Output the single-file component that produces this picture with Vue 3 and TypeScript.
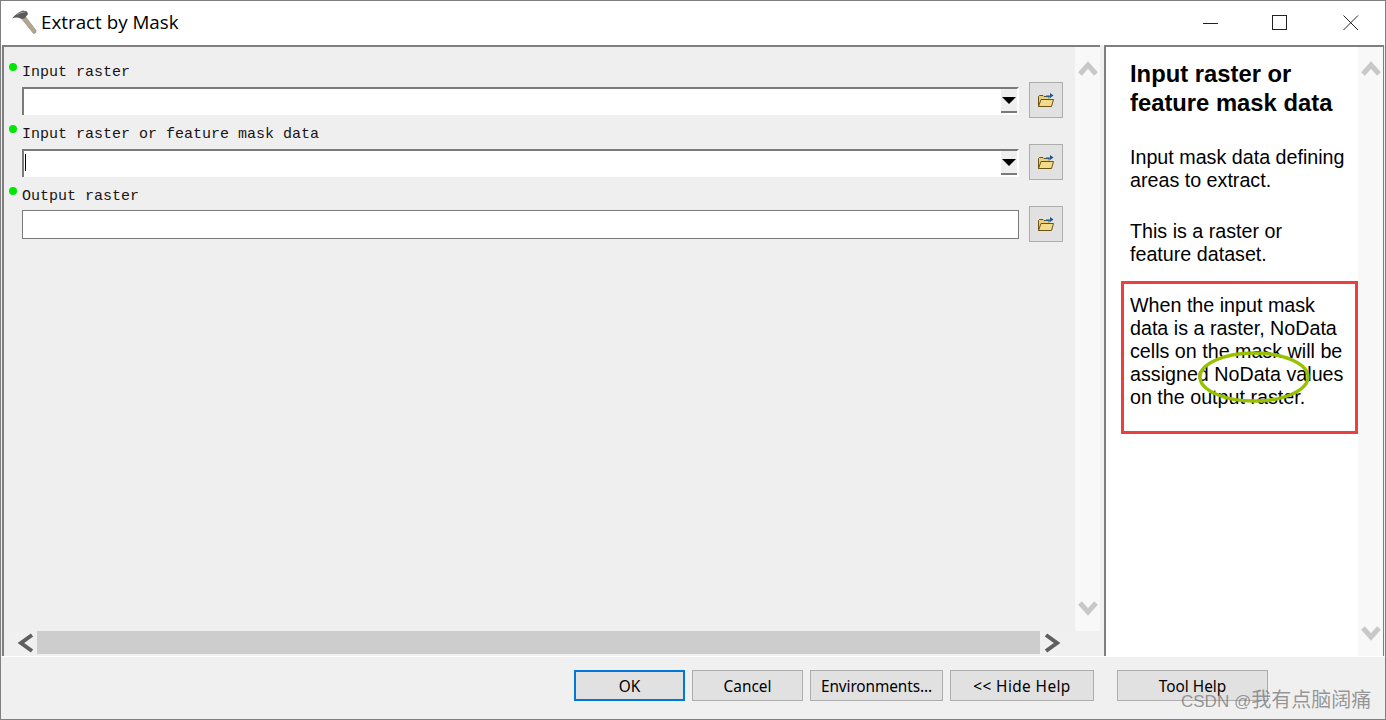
<script setup lang="ts">
interface Field { label: string; kind: 'combo' | 'input'; caret?: boolean }
const fields: Field[] = [
  { label: 'Input raster', kind: 'combo' },
  { label: 'Input raster or feature mask data', kind: 'combo', caret: true },
  { label: 'Output raster', kind: 'input' },
]
</script>

<template>
  <div class="window">
    <div class="top-strip"></div>
    <header class="titlebar">
      <svg class="hammer" width="26" height="26" viewBox="0 0 26 26">
        <path d="M10.5 8.5 L14 6 L25 20.5 Q25.5 23.5 22.5 23.5 Z" fill="#b3a68c" stroke="#8f8f86" stroke-width=".7"/>
        <path d="M1 8.5 Q6 2.5 12 0.5 L16 1.5 L17 4 L13.5 8.5 L10.5 9 Q6 6.5 1 8.5 Z" fill="#5a5a5a"/>
        <path d="M6 4.5 Q10 2 14 2" stroke="#a0a0a0" stroke-width="1" fill="none"/>
      </svg>
      <span class="title">Extract by Mask</span>
      <div class="controls">
        <svg class="ctl-min" width="16" height="16" viewBox="0 0 16 16"><path d="M0 8.5H15" stroke="#222" fill="none"/></svg>
        <svg width="16" height="16" viewBox="0 0 16 16"><rect x=".5" y=".5" width="14" height="14" stroke="#222" fill="none"/></svg>
        <svg width="16" height="16" viewBox="0 0 16 16"><path d="M.5 .5L15 15M15 .5L.5 15" stroke="#222" fill="none"/></svg>
      </div>
    </header>

    <main class="main">
      <section class="tool-pane">
        <div class="tool-upper">
          <div class="form">
            <div v-for="f in fields" :key="f.label" class="field">
              <span class="dot"></span>
              <div class="field-body">
                <label class="label">{{ f.label }}</label>
                <div v-if="f.kind === 'combo'" class="combo">
                  <div class="combo-text"><i v-if="f.caret" class="caret"></i></div>
                  <div class="combo-btn"><b class="arrow"></b></div>
                </div>
                <div v-else class="text-input"></div>
              </div>
              <button class="browse" type="button">
                <svg width="18" height="16" viewBox="0 0 18 16">
                  <path d="M1.5 14.5V4.5L2.5 3.5H6L7 4.5H12V6.5" fill="#e8cf7d" stroke="#6b5314" stroke-width="1"/>
                  <path d="M1.5 14.5L4 7.5H16.5L14.5 14.5Z" fill="#f3db8c" stroke="#6b5314" stroke-width="1"/>
                  <path d="M9 3.5H13V1L16.5 3.5L13 6V4.8H9Z" fill="#14589c"/>
                </svg>
              </button>
            </div>
          </div>
          <div class="vscroll">
            <svg class="chev" width="20" height="16" viewBox="0 0 20 16"><path d="M2 14L10 5L18 14" fill="none" stroke="#c8c8c8" stroke-width="5"/></svg>
            <svg class="chev" width="20" height="16" viewBox="0 0 20 16"><path d="M2 2L10 11L18 2" fill="none" stroke="#c8c8c8" stroke-width="5"/></svg>
          </div>
        </div>
        <div class="hscroll">
          <svg width="18" height="20" viewBox="0 0 18 20"><path d="M16 2L5 10L16 18" fill="none" stroke="#5f5f5f" stroke-width="4"/></svg>
          <div class="thumb"></div>
          <svg width="18" height="20" viewBox="0 0 18 20"><path d="M3 2L14 10L3 18" fill="none" stroke="#5f5f5f" stroke-width="4"/></svg>
        </div>
      </section>

      <aside class="help-pane">
        <div class="help-content">
          <h2>Input raster or<br>feature mask data</h2>
          <p class="p1">Input mask data defining<br>areas to extract.</p>
          <p class="p2">This is a raster or<br>feature dataset.</p>
          <p class="boxed">When the input mask<br>data is a raster, NoData<br>cells on the mask will be<br>assigned NoData values<br>on the output raster.</p>
          <svg class="ellipse" width="116" height="54" viewBox="0 0 116 54">
            <ellipse cx="58" cy="27" rx="54" ry="24" fill="none" stroke="#97c100" stroke-width="3.4"/>
          </svg>
        </div>
        <div class="help-scroll">
          <svg class="chev" width="20" height="16" viewBox="0 0 20 16"><path d="M2 14L10 5L18 14" fill="none" stroke="#c8c8c8" stroke-width="5"/></svg>
          <svg class="chev" width="20" height="16" viewBox="0 0 20 16"><path d="M2 2L10 11L18 2" fill="none" stroke="#c8c8c8" stroke-width="5"/></svg>
        </div>
      </aside>
    </main>

    <footer class="footer">
      <button class="btn ok" type="button">OK</button>
      <button class="btn cancel" type="button">Cancel</button>
      <button class="btn env" type="button">Environments...</button>
      <button class="btn hide" type="button">&lt;&lt; Hide Help</button>
      <button class="btn tool" type="button">Tool Help</button>
      <div class="watermark"><span class="wm-l">CSDN @</span><span class="wm-c">我有点脑阔痛</span></div>
    </footer>
  </div>
</template>

<style scoped>
.window {
  position: relative;
  width: 1386px;
  height: 720px;
  box-sizing: border-box;
  border: 1px solid #7f7f7f;
  display: flex;
  flex-direction: column;
  background: #f0f0f0;
  overflow: hidden;
}
.top-strip {
  position: absolute;
  left: 299px;
  top: -1px;
  width: 732px;
  height: 1px;
  background: #1c1216;
}
.titlebar {
  height: 44px;
  flex: none;
  background: #fff;
  display: flex;
  align-items: center;
  padding-left: 10px;
}
.title {
  font: 18.8px/24px "Open Sans", sans-serif;
  color: #000;
  margin: -2px 0 0 4px;
}
.controls {
  margin-left: auto;
  display: flex;
  gap: 55px;
  padding-right: 26px;
}
.ctl-min { margin-right: -2px; }
.main {
  flex: none;
  height: 611px;
  display: flex;
  background: #f0f0f0;
  border-bottom: 1px solid #fff;
}
.tool-pane {
  width: 1098px;
  margin-left: 1px;
  border-left: 2px solid #7f7f7f;
  border-top: 2px solid #7f7f7f;
  display: flex;
  flex-direction: column;
  box-sizing: border-box;
  flex: none;
}
.tool-upper {
  height: 584px;
  flex: none;
  display: flex;
}
.form {
  flex: 1;
  background: #efefef;
  padding: 13px 12px 0 5px;
}
.vscroll, .help-scroll {
  width: 25px;
  flex: none;
  background: #f8f8f8;
  display: flex;
  flex-direction: column;
  justify-content: space-between;
  align-items: center;
}
.vscroll { padding: 13px 0 14px; box-sizing: border-box; }
.field {
  display: flex;
  height: 62px;
}
.dot {
  width: 8px;
  height: 8px;
  flex: none;
  margin: 3px 5px 0 0;
  border-radius: 50%;
  background: #00e800;
}
.field-body {
  flex: 1;
  min-width: 0;
}
.label {
  display: block;
  height: 27px;
  font: 15px/26px "Liberation Mono", monospace;
  color: #1a1414;
}
.combo {
  height: 28px;
  display: flex;
  background: #fff;
}
.combo-text {
  flex: 1;
  border-top: 2px solid #7a7a7a;
  border-left: 2px solid #7a7a7a;
  padding-left: 1px;
  box-sizing: border-box;
}
.caret {
  display: block;
  width: 1px;
  height: 17px;
  margin-top: 3px;
  background: #000;
}
.combo-btn {
  width: 18px;
  flex: none;
  box-sizing: border-box;
  height: 28px;
  position: relative;
  background: #efefef;
  border-right: 2px solid #fff;
  border-top: 2px solid #7a7a7a;
  border-bottom: 2px solid #fff;
}
.combo-btn::after {
  content: "";
  position: absolute;
  left: 0;
  right: 0;
  bottom: 0;
  height: 2px;
  background: #7a7a7a;
}
.arrow {
  position: absolute;
  left: 1px;
  top: 8px;
  width: 0;
  height: 0;
  border-left: 7px solid transparent;
  border-right: 7px solid transparent;
  border-top: 7px solid #000;
}
.text-input {
  height: 29px;
  margin-top: -1px;
  box-sizing: border-box;
  background: #fff;
  border: 1px solid #7a7a7a;
}
.browse {
  width: 34px;
  height: 36px;
  flex: none;
  margin: 22px 0 0 10px;
  padding: 0;
  background: #e1e1e1;
  border: 1px solid #adadad;
  display: flex;
  align-items: center;
  justify-content: center;
}
.hscroll {
  height: 23px;
  flex: none;
  display: flex;
  align-items: center;
  padding-left: 12px;
  background: #f0f0f0;
}
.thumb {
  width: 1003px;
  height: 23px;
  margin: 0 3px;
  background: #cdcdcd;
}
.help-pane {
  width: 280px;
  flex: none;
  margin-left: 4px;
  display: flex;
  box-sizing: border-box;
  border-left: 2px solid #7f7f7f;
  border-top: 2px solid #7f7f7f;
  border-right: 1px solid #7f7f7f;
  background: #fff;
}
.help-content {
  position: relative;
  flex: 1;
  padding: 12px 0 0 24px;
  font-family: "Liberation Sans", Arial, sans-serif;
  color: #000;
}
.help-content h2 {
  margin: 0;
  font-size: 23.8px;
  line-height: 29px;
  font-weight: 700;
}
.help-content p {
  margin: 0;
  font-size: 19.7px;
  line-height: 23px;
}
.help-content .p1 { padding-top: 29px; }
.help-content .p2 { padding-top: 28px; }
.help-content .boxed {
  margin: 15px 0 0 -9px;
  padding: 10px 0 24px 6px;
  width: 237px;
  height: 153px;
  box-sizing: border-box;
  border: 3px solid #ee3f3f;
}
.ellipse {
  position: absolute;
  left: 90px;
  top: 303px;
}
.help-scroll {
  padding: 13px 0 14px;
  box-sizing: border-box;
}
.footer {
  position: relative;
  flex: 1;
  background: #f0f0f0;
  display: flex;
  align-items: flex-start;
  padding: 13px 0 0 573px;
  gap: 7px;
  box-sizing: border-box;
}
.btn {
  height: 31px;
  box-sizing: border-box;
  padding: 1px 0 0;
  background: #e1e1e1;
  border: 1px solid #adadad;
  font: 15.4px/27px "Noto Sans", sans-serif;
  color: #000;
}
.ok { width: 111px; border: 2px solid #0078d7; }
.cancel { width: 111px; }
.env { width: 133px; letter-spacing: -0.1px; }
.hide { width: 144px; letter-spacing: 0.4px; }
.tool { width: 151px; margin-left: 16px; }
.watermark {
  position: absolute;
  left: 1180px;
  top: 29px;
  display: flex;
  align-items: baseline;
  color: rgba(120, 120, 120, 0.75);
  white-space: nowrap;
}
.wm-l { font: 17px/26px "Liberation Sans", sans-serif; }
.wm-c { font: 20px/26px "Noto Sans CJK SC", sans-serif; }
</style>
